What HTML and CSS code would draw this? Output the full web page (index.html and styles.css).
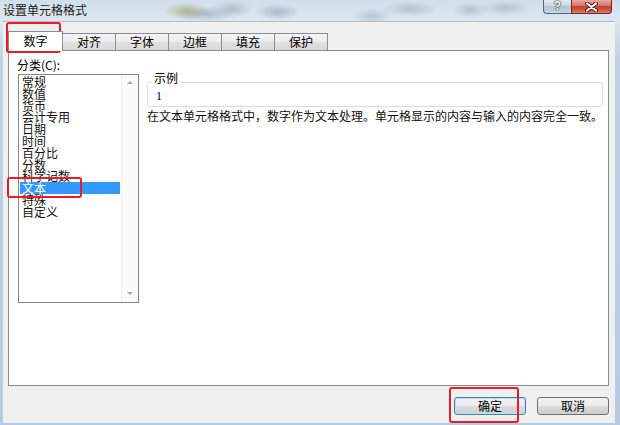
FILE: index.html
```html
<!DOCTYPE html>
<html lang="zh-CN">
<head>
<meta charset="utf-8">
<title>设置单元格格式</title>
<link rel="stylesheet" href="styles.css">
</head>
<body>
<div class="window">
  <div class="titlebar">
    <span class="title">设置单元格格式</span>
    <div class="caption-btns">
      <span class="cap-btn help">?</span>
      <span class="cap-btn close">
        <svg width="13" height="10" viewBox="0 0 13 10">
          <path d="M2 1.5 L11 8.5 M11 1.5 L2 8.5" stroke="#5a1a14" stroke-width="4" stroke-linecap="round"/>
          <path d="M2 1.5 L11 8.5 M11 1.5 L2 8.5" stroke="#ffffff" stroke-width="2.2" stroke-linecap="round"/>
        </svg>
      </span>
    </div>
  </div>
  <div class="client">
    <div class="tabs">
      <div class="tab active">数字</div>
      <div class="tab">对齐</div>
      <div class="tab">字体</div>
      <div class="tab">边框</div>
      <div class="tab">填充</div>
      <div class="tab">保护</div>
    </div>
    <div class="panel">
      <div class="cat">
        <div class="cat-label">分类(<u>C</u>):</div>
        <div class="listbox">
          <ul class="items">
            <li>常规</li>
            <li>数值</li>
            <li>货币</li>
            <li>会计专用</li>
            <li>日期</li>
            <li>时间</li>
            <li>百分比</li>
            <li>分数</li>
            <li>科学记数</li>
            <li class="selected">文本</li>
            <li>特殊</li>
            <li>自定义</li>
          </ul>
          <div class="scrollbar">
            <span class="arrow up"></span>
            <span class="arrow down"></span>
          </div>
        </div>
      </div>
      <div class="detail">
        <div class="groupbox">
          <span class="group-label">示例</span>
          <div class="sample-value">1</div>
        </div>
        <p class="desc">在文本单元格格式中，数字作为文本处理。单元格显示的内容与输入的内容完全一致。</p>
      </div>
    </div>
    <div class="footer">
      <button class="btn default">确定</button>
      <button class="btn">取消</button>
    </div>
  </div>
  <div class="mark mark-tab"></div>
  <div class="mark mark-item"></div>
  <div class="mark mark-ok"></div>
</div>
</body>
</html>
```

FILE: styles.css
```css
* { box-sizing: border-box; }
html, body { margin: 0; padding: 0; }
body {
  width: 620px;
  height: 425px;
  overflow: hidden;
  font-family: "Noto Sans CJK SC", "Liberation Sans", sans-serif;
  font-size: 12px;
  color: #000;
}
.window {
  position: relative;
  width: 620px;
  height: 425px;
  display: flex;
  flex-direction: column;
  background:
    radial-gradient(ellipse 22px 9px at 186px 11px, rgba(150,150,90,0.55), transparent),
    radial-gradient(ellipse 30px 8px at 205px 14px, rgba(90,110,130,0.35), transparent),
    radial-gradient(ellipse 20px 9px at 232px 9px, rgba(110,125,140,0.35), transparent),
    radial-gradient(ellipse 22px 8px at 278px 12px, rgba(90,105,125,0.35), transparent),
    radial-gradient(ellipse 20px 8px at 372px 16px, rgba(100,130,160,0.3), transparent),
    radial-gradient(ellipse 28px 8px at 410px 9px, rgba(110,125,140,0.3), transparent),
    radial-gradient(ellipse 18px 8px at 470px 10px, rgba(110,125,140,0.3), transparent),
    radial-gradient(ellipse 25px 8px at 505px 8px, rgba(110,125,140,0.3), transparent),
    linear-gradient(#d2dfeb, #dbe6f0 20px, #bcd2e7 60px, #b4cce3);
}
.titlebar {
  flex: none;
  height: 21px;
  display: flex;
  align-items: flex-start;
}
.title {
  padding-left: 3px;
  line-height: 20px;
  font-size: 12px;
  color: #1a1a1a;
}
.caption-btns {
  margin-left: auto;
  margin-right: 8px;
  display: flex;
}
.cap-btn {
  height: 14px;
  border: 1px solid #56677b;
  border-top: none;
  display: flex;
  align-items: center;
  justify-content: center;
}
.help {
  width: 28px;
  border-right: none;
  border-radius: 0 0 0 4px;
  background: linear-gradient(#e4ebf2, #c9d5e1 50%, #b3c3d3 50%, #c8d6e3);
  color: #fff;
  font-family: "Liberation Sans", sans-serif;
  font-weight: bold;
  font-size: 12px;
  line-height: 13px;
  text-shadow: 0 0 1px #333, 0 0 1px #333, 0 0 2px #445;
}
.close {
  width: 41px;
  border-color: #6b2a22;
  border-radius: 0 0 4px 0;
  background: linear-gradient(#e9a99c, #d47566 45%, #c4412f 50%, #cf5e4c 85%, #e08a78);
}
.client {
  flex: 1;
  margin: 0 5px 2px 3px;
  background: #f0f0f0;
  border-top: 1px solid #aebfcf;
  display: flex;
  flex-direction: column;
}
.tabs {
  flex: none;
  height: 28px;
  padding: 9px 0 0 5px;
  display: flex;
  align-items: flex-start;
}
.tab {
  width: 54px;
  height: 17px;
  margin-top: 2px;
  margin-left: -1px;
  border: 1px solid #898c95;
  border-bottom: none;
  background: linear-gradient(#f4f4f4, #ececec 50%, #dfdfdf 50%, #d9d9d9);
  text-align: center;
  line-height: 16px;
  font-size: 12px;
}
.tab.active {
  position: relative;
  z-index: 1;
  width: 55px;
  height: 20px;
  margin-top: 0;
  margin-left: 0;
  background: #fff;
  line-height: 18px;
}
.panel {
  flex: none;
  height: 336px;
  margin: 0 6px 0 5px;
  background: #fff;
  border: 1px solid #898c95;
  display: flex;
  padding: 7px 7px 0 8px;
}
.cat {
  width: 122px;
  flex: none;
}
.cat-label {
  line-height: 14px;
  font-size: 12px;
}
.cat-label u { text-decoration: none; }
.listbox {
  margin: 2px 0 0 1px;
  width: 121px;
  height: 229px;
  border: 1px solid #828790;
  display: flex;
}
.items {
  flex: 1;
  list-style: none;
  margin: 0;
  padding: 1px 0 0 0;
}
.items li {
  height: 11.8px;
  line-height: 11.8px;
  margin: 0 1px;
  padding-left: 2px;
  font-size: 12px;
  white-space: nowrap;
  color: #111;
}
.items li.selected {
  background: #3399ff;
  color: #fff;
}
.scrollbar {
  width: 17px;
  flex: none;
  background: #fafafa;
  border-left: 1px solid #efefef;
  display: flex;
  flex-direction: column;
  align-items: center;
  justify-content: space-between;
  padding: 6px 0 7px;
}
.arrow {
  width: 0;
  height: 0;
  border-left: 3px solid transparent;
  border-right: 3px solid transparent;
}
.arrow.up { border-bottom: 3px solid #a9a9a9; }
.arrow.down { border-top: 3px solid #a9a9a9; }
.detail {
  flex: 1;
  margin-left: 8px;
  padding-top: 24px;
}
.groupbox {
  position: relative;
  height: 25px;
  border: 1px solid #d5dfe5;
  border-radius: 3px;
  padding: 6px 0 0 8px;
}
.group-label {
  position: absolute;
  top: -12px;
  left: 4px;
  padding: 0 2px;
  background: #fff;
  line-height: 14px;
  font-size: 12px;
}
.sample-value {
  font-family: "Liberation Serif", serif;
  font-size: 12px;
  line-height: 14px;
}
.desc {
  margin: 2px 0 0;
  line-height: 14px;
  font-size: 12px;
  white-space: nowrap;
  color: #111;
}
.footer {
  flex: 1;
  display: flex;
  justify-content: flex-end;
  align-items: flex-start;
  gap: 11px;
  padding: 11px 6px 0 0;
}
.btn {
  width: 72px;
  height: 18px;
  padding: 0;
  border: 1px solid #707070;
  border-radius: 3px;
  background: linear-gradient(#f2f2f2, #ebebeb 50%, #dddddd 50%, #cfcfcf);
  font-family: inherit;
  font-size: 12px;
  line-height: 16px;
  color: #000;
}
.btn.default {
  border-color: #3c7fb1;
  box-shadow: inset 0 0 0 1px #b9e1f8;
}
.mark {
  position: absolute;
  border: 2px solid #ec1c24;
  border-radius: 3px;
}
.mark-tab { left: 6px; top: 22px; width: 55px; height: 31px; }
.mark-item { left: 7px; top: 177px; width: 75px; height: 21px; }
.mark-ok { left: 449px; top: 387px; width: 70px; height: 36px; }
```
